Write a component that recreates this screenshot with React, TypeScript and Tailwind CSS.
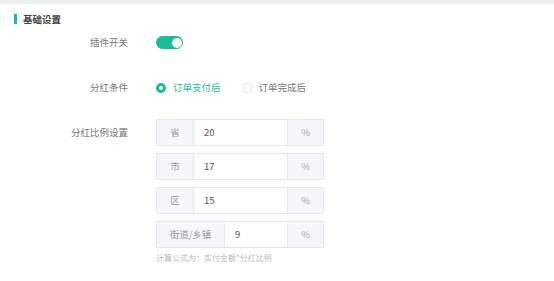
import React from 'react';

const font = { fontFamily: '"Noto Sans CJK SC", "Noto Sans", sans-serif' };

interface RateRowProps {
  label: string;
  value: string;
  wide?: boolean;
}

const RateRow: React.FC<RateRowProps> = ({ label, value, wide }) => (
  <div className="flex h-[27px] w-[168px] rounded-[2px] border border-[#e4e7ed] overflow-hidden">
    <div
      className={`${wide ? 'w-[68px]' : 'w-[37px]'} flex items-center justify-center bg-[#f5f7fa] border-r border-[#e4e7ed] text-[9.5px] text-[#999]`}
    >
      {label}
    </div>
    <div className="flex-1 flex items-center pl-[10px] bg-white text-[9.5px] text-[#555]">{value}</div>
    <div className="w-[36px] flex items-center justify-center bg-[#f5f7fa] border-l border-[#e4e7ed] text-[9.5px] text-[#aaa]">
      %
    </div>
  </div>
);

export default function App() {
  const rates = [
    { label: '省', value: '20' },
    { label: '市', value: '17' },
    { label: '区', value: '15' },
    { label: '街道/乡镇', value: '9', wide: true },
  ];

  return (
    <div className="w-[554px] h-[281px] bg-white overflow-hidden" style={font}>
      <div className="h-[4px] bg-[#eef1f4]" />

      <div className="flex items-center h-[12px] mt-[9px] pl-[14px]">
        <div className="w-[2.5px] h-[10px] bg-[#1cc09b]" />
        <span className="ml-[6.5px] text-[9.5px] font-bold text-[#444]">基础设置</span>
      </div>

      <div className="flex items-center h-[13px] mt-[11px]">
        <div className="w-[128px] text-right text-[9.5px] text-[#777]">插件开关</div>
        <div className="ml-[28px] relative w-[27px] h-[13px] rounded-full bg-[#1abd98]">
          <div className="absolute right-[1.5px] top-[1.5px] w-[10px] h-[10px] rounded-full bg-white" />
        </div>
      </div>

      <div className="flex items-center h-[13px] mt-[32px]">
        <div className="w-[128px] text-right text-[9.5px] text-[#777]">分红条件</div>
        <div className="ml-[28px] flex items-center">
          <div className="w-[10px] h-[10px] rounded-full bg-[#1abd98] flex items-center justify-center">
            <div className="w-[4px] h-[4px] rounded-full bg-white" />
          </div>
          <span className="ml-[7px] text-[9.5px] text-[#1abd98]">订单支付后</span>
          <div className="ml-[21px] w-[10px] h-[10px] rounded-full border border-[#dcdfe6] bg-white" />
          <span className="ml-[7px] text-[9.5px] text-[#777]">订单完成后</span>
        </div>
      </div>

      <div className="flex items-start mt-[25px]">
        <div className="w-[128px] text-right text-[9.5px] text-[#777] leading-[27px]">分红比例设置</div>
        <div className="ml-[28px] flex flex-col">
          <div className="flex flex-col gap-[7px]">
            {rates.map((r) => (
              <RateRow key={r.label} label={r.label} value={r.value} wide={r.wide} />
            ))}
          </div>
          <div className="mt-[4px] text-[8px] text-[#bbb] leading-[12px]">计算公式为：实付金额*分红比例</div>
        </div>
      </div>
    </div>
  );
}
